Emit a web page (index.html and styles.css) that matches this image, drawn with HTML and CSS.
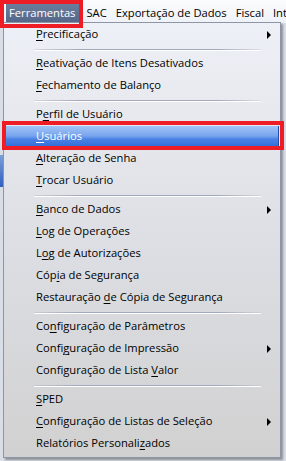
FILE: index.html
```html
<!DOCTYPE html>
<html lang="pt-BR">
<head>
<meta charset="utf-8">
<title>Ferramentas</title>
<link rel="stylesheet" href="styles.css">
</head>
<body>
<div class="screen">
  <nav class="menubar">
    <span class="mb-item active">Ferramentas</span>
    <span class="mb-item">SAC</span>
    <span class="mb-item">Exportação de Dados</span>
    <span class="mb-item">Fiscal</span>
    <span class="mb-item">Integração</span>
  </nav>
  <div class="behind"><div class="behind-win"></div></div>

  <div class="popup">
    <div class="item sub"><span><u>P</u>recificação</span></div>
    <div class="sep"></div>
    <div class="item"><span><u>R</u>eativação de Itens Desativados</span></div>
    <div class="item"><span><u>F</u>echamento de Balanço</span></div>
    <div class="sep"></div>
    <div class="item"><span>P<u>e</u>rfil de Usuário</span></div>
    <div class="item hot"><span><u>U</u>suários</span></div>
    <div class="item"><span><u>A</u>lteração de Senha</span></div>
    <div class="item"><span><u>T</u>rocar Usuário</span></div>
    <div class="sep"></div>
    <div class="item sub"><span><u>B</u>anco de Dados</span></div>
    <div class="item"><span><u>L</u>og de Operações</span></div>
    <div class="item"><span>L<u>o</u>g de Autorizações</span></div>
    <div class="item"><span>Cóp<u>i</u>a de Segurança</span></div>
    <div class="item"><span>Restauração <u>d</u>e Cópia de Segurança</span></div>
    <div class="sep"></div>
    <div class="item"><span>Co<u>n</u>figuração de Parâmetros</span></div>
    <div class="item sub"><span>Confi<u>g</u>uração de Impressão</span></div>
    <div class="item"><span>Configuração de Lista <u>V</u>alor</span></div>
    <div class="sep"></div>
    <div class="item"><span><u>S</u>PED</span></div>
    <div class="item sub"><span><u>C</u>onfiguração de Listas de Seleção</span></div>
    <div class="item"><span>Relatórios Personali<u>z</u>ados</span></div>
  </div>

  <div class="mark mark-menu"></div>
  <div class="mark mark-item"></div>
</div>
</body>
</html>
```

FILE: styles.css
```css
* { box-sizing: border-box; }
html, body { margin: 0; padding: 0; }
body {
  width: 286px;
  height: 461px;
  overflow: hidden;
  font-family: "Open Sans", "Noto Sans", "DejaVu Sans", sans-serif;
  font-size: 11.2px;
  color: #000;
  background: #dfe5ee;
}
.screen {
  position: relative;
  width: 286px;
  height: 461px;
  overflow: hidden;
}
.menubar {
  display: flex;
  align-items: stretch;
  height: 23px;
  padding: 4px 0 0 6px;
  background: linear-gradient(#fbfcfd, #eef2f8);
  white-space: nowrap;
  overflow: hidden;
}
.mb-item {
  display: flex;
  align-items: center;
  height: 18px;
  padding: 0 3px 1px 3px;
  margin-right: 3px;
  line-height: 16px;
}
.mb-item.active {
  color: #fff;
  background: linear-gradient(#6b7d9c, #56688a);
  padding: 0 5px 1px 3px;
}
.behind {
  height: 438px;
  padding-top: 132px;
  background: #d9dee6;
}
.behind-win {
  width: 3px;
  height: 32px;
  background: linear-gradient(#7b9fd8, #2f5fc0);
}
.popup {
  position: absolute;
  left: 3px;
  top: 22px;
  width: 278px;
  padding: 1px 1px 2px 1px;
  border: 1px solid #8e96a6;
  background: linear-gradient(#edf0f6, #dcdde2 55%, #d1d1d1);
  box-shadow: 2px 2px 2px rgba(0, 0, 0, 0.35);
}
.item {
  position: relative;
  display: flex;
  align-items: center;
  height: 22px;
  padding-left: 31px;
  padding-bottom: 3px;
  white-space: nowrap;
}
.item u {
  text-decoration-thickness: 1px;
  text-underline-offset: 2px;
}
.item.sub::after {
  content: "";
  position: absolute;
  right: 8px;
  top: 7px;
  border-style: solid;
  border-width: 4px 0 4px 4px;
  border-color: transparent transparent transparent #000;
}
.item.hot {
  color: #fff;
  background: linear-gradient(#a2c4f6, #78a4ee 45%, #4a82e4 60%, #2e69d8);
  border-right: 1px solid #1f4fa8;
}
.sep {
  height: 7px;
  padding: 3px 18px 0 29px;
}
.sep::before {
  content: "";
  display: block;
  height: 1px;
  background: linear-gradient(90deg, rgba(160,168,186,0.3), #a0a8bb 20%, #a0a8bb 80%, rgba(160,168,186,0.2));
  box-shadow: 0 1px 0 #ffffff;
}
.mark {
  position: absolute;
  border: 4px solid #ee1c25;
}
.mark-menu {
  left: 0;
  top: 0;
  width: 83px;
  height: 28px;
}
.mark-item {
  left: 2px;
  top: 121px;
  width: 282px;
  height: 29px;
}
```
